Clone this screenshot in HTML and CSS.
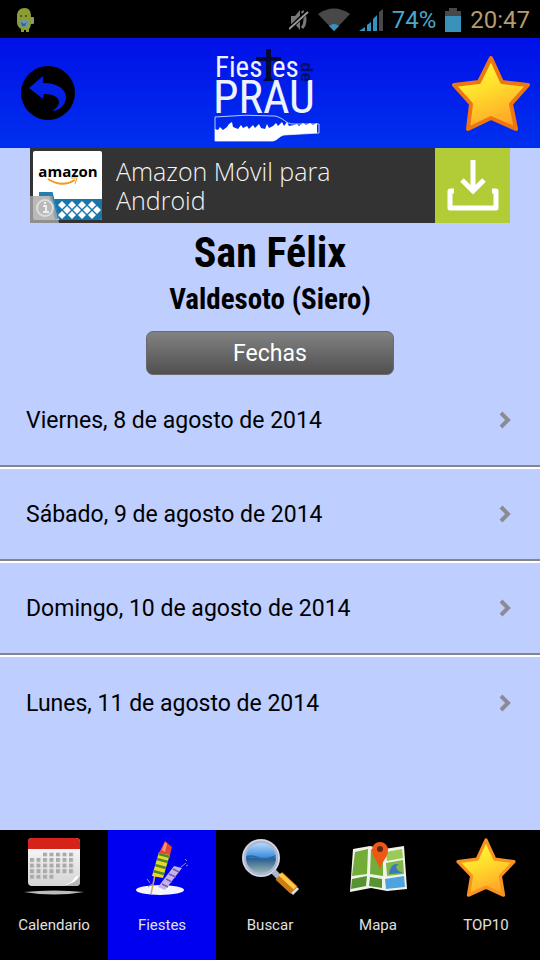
FILE: index.html
```html
<!DOCTYPE html>
<html lang="es">
<head>
<meta charset="utf-8">
<meta name="viewport" content="width=device-width, initial-scale=1">
<title>Fiestes de Prau</title>
<link rel="stylesheet" href="styles.css">
</head>
<body>
<div class="status">
  <svg width="18" height="26" viewBox="0 0 18 26" aria-hidden="true">
    <rect x="13" y="10" width="5" height="7" rx="1" fill="#8d9668"/>
    <path d="M1 9C1 4 4 1 8.500 1S15 4 15 9v7c0 3-1 5-2 6v3h-3v-2H8v2H5v-3C2 20 1 18 1 15z" fill="#8b9c35"/>
    <path d="M3 14c3-2 8-2 10 0l-1 5c-2 2-5 2-7 0z" fill="#6a99a0"/>
    <path d="M5 15l3 2 3-2-2 4H6z" fill="#315f93"/>
    <circle cx="5" cy="9" r="1" fill="#3c4816"/><circle cx="10" cy="9" r="1" fill="#3c4816"/>
  </svg>
  <div class="status-icons">
    <svg width="20" height="24" viewBox="0 0 20 24" aria-hidden="true">
      <path d="M2 8h4l5-6v20l-5-6H2z" fill="#777"/><path d="M13 3c4 4 4 13 0 17" fill="none" stroke="#777" stroke-width="3"/>
      <path d="M0 21L18 4" stroke="#000" stroke-width="4"/><path d="M0 21L19 4" stroke="#999" stroke-width="2"/>
    </svg>
    <svg width="32" height="24" viewBox="0 0 32 24" aria-hidden="true">
      <path d="M0 6Q16-5 32 6L16 23z" fill="#484848"/><path d="M11 18q5-4 10 0l-5 5z" fill="#3194c4"/>
    </svg>
    <svg width="24" height="24" viewBox="0 0 24 24" aria-hidden="true">
      <path d="M0 23l6-4v4zM8 17l4-3v9H8zM14 11l4-4v16h-4z" fill="#3194c4"/><path d="M20 4l4-3v22h-4z" fill="#484848"/>
    </svg>
    <span class="percent">74%</span>
    <svg class="battery" width="16" height="24" viewBox="0 0 16 24" aria-hidden="true">
      <path d="M0 3h4V0h8v3h4v21H0z" fill="#484848"/><path d="M0 8h16v16H0z" fill="#3a91b9"/>
    </svg>
    <time>20:47</time>
  </div>
</div>

<header class="header">
  <button class="icon-button back" type="button" aria-label="Volver">
    <svg width="54" height="54" viewBox="0 0 54 54" aria-hidden="true">
      <circle cx="27" cy="27" r="27" fill="#000"/>
      <path d="M8 22L22 10v7c14 0 23 6 23 14 0 7-6 14-14 14 4-3 7-5 7-9 0-5-6-8-15-8l-1 5z" fill="#0520e6"/>
    </svg>
  </button>
  <svg class="logo" width="112" height="104" viewBox="214 40 112 104" role="img" aria-label="Fiestes de Prau">
    <text class="logo-text" font-size="29"><tspan x="215" y="76">Fies</tspan><tspan x="272" y="76">es</tspan><tspan x="213" y="112" font-size="46">PRAU</tspan></text>
    <path d="M266 48h5v8h10v4h-10v16l3 4h-11l3-4V60h-10v-4h10z" fill="#020838"/>
    <text class="logo-de" x="0" y="0" font-size="17" transform="translate(301 61) rotate(90)">de</text>
    <path d="M215 116Q245 113 275 115C284 117 286 123 293 123H319V132L284 134C279 135 278 139 273 140H215Z" fill="none" stroke="#b9c9ff"/>
    <path d="M215 128l3 1 2-3 3 3 4-3 2-3 3-2 1 5 5 2 3-4 2 3 4-2 2 3 4-4 2 3 4-4 2 4 4 1 2-5 2 4 4-2 3-3 2 3 4-4 2 4 3-4 2 4 5-1 3-1 2 2 4-3 3 2 4-2 3 2 4-2V132L284 134C279 135 278 139 273 140H215Z" fill="#fff"/>
  </svg>
  <button class="icon-button" type="button" aria-label="Favorito">
    <svg width="80" height="77" viewBox="0 0 80 77" aria-hidden="true">
      <defs><linearGradient id="gold" x1=".3" y1="0" x2=".7" y2="1"><stop offset="0" stop-color="#ffff38"/><stop offset=".45" stop-color="#ffdb2c"/><stop offset="1" stop-color="#ff9e27"/></linearGradient></defs>
      <path d="M40 3L51 27 77 30 60 49 65 74 40 63 17 74 20 49 3 30 28 27z" fill="url(#gold)" stroke="#ef7510" stroke-width="4" stroke-linejoin="round"/>
    </svg>
  </button>
</header>

<main class="content">
  <a class="ad" href="#descargar">
    <svg class="ad-logo" width="72" height="75" viewBox="0 0 72 75" role="img" aria-label="amazon">
      <rect x="3" y="3" width="69" height="69" rx="2" fill="#fff"/>
      <text class="amazon" x="38" y="29" font-size="15" text-anchor="middle">amazon</text>
      <path d="M18 31q14 9 27 1" fill="none" stroke="#f49b25" stroke-width="2"/><path d="M41 30l6 0-2 6" fill="none" stroke="#f49b25" stroke-width="1"/>
      <path d="M9 46h12l6 25" fill="none" stroke="#247fae" stroke-width="4"/>
      <path d="M24 51h48v19q0 2-2 2H29z" fill="#1976ab"/>
      <g fill="#fff"><path id="d" d="M32 53l4 4-4 4-4-4z"/><use href="#d" x="10"/><use href="#d" x="20"/><use href="#d" x="30"/><use href="#d" x="5" y="5"/><use href="#d" x="15" y="5"/><use href="#d" x="25" y="5"/><use href="#d" x="35" y="5"/><use href="#d" y="10"/><use href="#d" x="10" y="10"/><use href="#d" x="20" y="10"/><use href="#d" x="30" y="10"/></g>
      <path d="M0 48h22l7 27H0z" fill="#a7a7a7" opacity=".8"/>
      <circle cx="15" cy="60" r="8" fill="none" stroke="#ddd" stroke-width="2"/><path d="M13 58h3v6m-3 0h6M15 54v2" fill="none" stroke="#eee" stroke-width="2"/>
    </svg>
    <span class="ad-text">Amazon Móvil para Android</span>
    <span class="ad-download">
      <svg width="52" height="52" viewBox="0 0 52 52" fill="none" stroke="#fff" stroke-width="5" aria-hidden="true">
        <path d="M26 0v31M15 20l11 11 11-11"/><path d="M7 31H3v17h46V31h-4" stroke-linejoin="round"/>
      </svg>
    </span>
  </a>
  <h1>San Félix</h1>
  <h2>Valdesoto (Siero)</h2>
  <button class="dates-button" type="button">Fechas</button>
  <ul class="dates">
    <li><a href="#d8">Viernes, 8 de agosto de 2014 <svg class="chevron" viewBox="0 0 12 18" aria-hidden="true"><path d="M2 2l7 7-7 7"/></svg></a></li>
    <li><a href="#d9">Sábado, 9 de agosto de 2014 <svg class="chevron" viewBox="0 0 12 18" aria-hidden="true"><path d="M2 2l7 7-7 7"/></svg></a></li>
    <li><a href="#d10">Domingo, 10 de agosto de 2014 <svg class="chevron" viewBox="0 0 12 18" aria-hidden="true"><path d="M2 2l7 7-7 7"/></svg></a></li>
    <li><a href="#d11">Lunes, 11 de agosto de 2014 <svg class="chevron" viewBox="0 0 12 18" aria-hidden="true"><path d="M2 2l7 7-7 7"/></svg></a></li>
  </ul>
</main>

<nav class="tabs">
  <a href="#calendario">
    <svg width="64" height="64" viewBox="0 0 64 64" aria-hidden="true">
      <defs><linearGradient id="paper" x2="0" y2="1"><stop stop-color="#fff"/><stop offset="1" stop-color="#d4d4d4"/></linearGradient>
      <pattern id="days" x="8" y="22" width="6.500" height="5.600" patternUnits="userSpaceOnUse"><rect width="4" height="4" fill="#aaa"/></pattern></defs>
      <rect x="6" y="2" width="52" height="48" rx="4" fill="url(#paper)"/>
      <path d="M6 13V6q0-4 4-4h44q4 0 4 4v7z" fill="#d5231b"/>
      <path d="M21 16.400h32v21.500H34v5.600H8V22h13z" fill="url(#days)"/>
      <path d="M58 40q-3 7-16 10h12q4 0 4-4z" fill="#b5b5b5"/><path d="M57 39q-2 8-15 10 10-3 11-8z" fill="#fff"/>
      <path d="M2 56q30-3 60 0-30 5-60 0z" fill="#bcbcbc"/>
    </svg>
    <span>Calendario</span>
  </a>
  <a class="active" href="#fiestes" aria-current="page">
    <svg width="64" height="64" viewBox="0 0 64 64" aria-hidden="true">
      <ellipse cx="30" cy="54" rx="24" ry="5" fill="#f5f5ff"/>
      <path d="M25 39l-4 19" stroke="#d9a35a" stroke-width="1.500"/>
      <path d="M29 16l11 2-7 24-11-2z" fill="#e8d82c"/>
      <path d="M29 18l11 3M27 23l11 3M25 29l11 3M23 35l11 3" stroke="#4f8925" stroke-width="2.500"/>
      <path d="M29 17l6-12 7 6-2 8z" fill="#df4939"/><path d="M32 14l3-8 2 2-2 8z" fill="#ff9170"/>
      <path d="M44 30l8 2-17 22-7-3z" fill="#c3b3e7"/><path d="M43 33l6 3M39 38l7 3M36 43l6 3M32 48l6 3" stroke="#7959b4" stroke-width="1.500"/>
      <path d="M51 31l5-4m-1-4l2 2m-1 5l2-1M17 43l3 4m-2 4l4-3" stroke="#9b8cc9" stroke-width="1"/>
    </svg>
    <span>Fiestes</span>
  </a>
  <a href="#buscar">
    <svg width="64" height="64" viewBox="0 0 64 64" aria-hidden="true">
      <defs><linearGradient id="lens" x2="0" y2="1"><stop stop-color="#c4e4ff"/><stop offset=".48" stop-color="#3b8dde"/><stop offset=".52" stop-color="#2a5c91"/><stop offset="1" stop-color="#a9c4b5"/></linearGradient></defs>
      <path d="M34 34l8 8" stroke="#abb6c9" stroke-width="6"/>
      <circle cx="23" cy="22" r="17" fill="url(#lens)" stroke="#aeb8d1" stroke-width="4"/>
      <circle cx="23" cy="22" r="18" fill="none" stroke="#e2e7f4" stroke-width="1"/>
      <path d="M8 20q6-2 12 1t18-2q-2 5-9 5t-12-2-8 1z" fill="#2b68a7"/>
      <path d="M41 40l15 14" stroke="#ce7c12" stroke-width="10"/><path d="M42 38l15 14" stroke="#ffc94b" stroke-width="4"/>
      <path d="M54 58l6-6" stroke="#ddd" stroke-width="3"/>
    </svg>
    <span>Buscar</span>
  </a>
  <a href="#mapa">
    <svg width="64" height="64" viewBox="0 0 64 64" aria-hidden="true">
      <path d="M7 13l17-3 14 3 20-3 3 43-20 2-16-3-21 4z" fill="#f1f3e8"/>
      <path d="M9 16l13-3-1 25-15 2zM25 13l12 3v24l-13-2z" fill="#74ac3a"/><path d="M40 16l16-3 1 9-16 3z" fill="#9acb56"/>
      <path d="M40 27l17-3 1 14-17 2z" fill="#82b848"/><path d="M6 43l15-3-1 10-15 3zM24 41l12 2v9l-13-2z" fill="#559333"/>
      <path d="M39 43l19-3 1 11-19 2z" fill="#4da3df"/><path d="M43 38c1-7 5-12 10-9-5 0-3 6 4 8z" fill="#397abd"/>
      <path d="M34 34c-2-10-8-12-8-20a8 8 0 0 1 16 0c0 8-6 10-8 20z" fill="#ed5915"/><circle cx="34" cy="13" r="3" fill="#5f2613"/>
    </svg>
    <span>Mapa</span>
  </a>
  <a href="#top10">
    <svg width="64" height="64" viewBox="0 0 80 80" aria-hidden="true">
      <path d="M40 5L51 29 75 32 58 50 62 74 40 64 18 74 22 50 5 32 29 29z" fill="url(#gold)" stroke="#f7931e" stroke-width="4" stroke-linejoin="round"/>
    </svg>
    <span>TOP10</span>
  </a>
</nav>
</body>
</html>
```
FILE: styles.css
```css
* {
  box-sizing: border-box;
}

body {
  margin: 0;
  min-height: 100vh;
  display: flex;
  flex-direction: column;
  background: #bdceff;
  color: #000;
  font-family: Roboto, "Liberation Sans", sans-serif;
}

a {
  color: inherit;
  text-decoration: none;
}

button {
  border: 0;
  padding: 0;
  font-family: inherit;
  cursor: pointer;
}

svg {
  display: block;
  flex: none;
}

.status {
  display: flex;
  align-items: center;
  justify-content: space-between;
  height: 38px;
  padding: 2px 10px 0 16px;
  background: #000;
  font-size: 24px;
}

.status-icons {
  display: flex;
  align-items: center;
  gap: 9px;
}

.percent {
  color: #4ba7cc;
}

.status time {
  color: #b49c6c;
}

.header {
  display: flex;
  align-items: center;
  justify-content: space-between;
  height: 110px;
  padding: 0 9px;
  background: linear-gradient(#0010e8, #0030ee);
}

.icon-button {
  display: flex;
  width: 80px;
  background: none;
}

.back {
  padding-left: 12px;
}

.logo-text {
  fill: #eef2ff;
  font-family: "Liberation Sans Narrow", "Roboto Condensed", "Liberation Sans", sans-serif;
}

.logo-de {
  fill: #020c60;
  font-family: "Liberation Sans Narrow", "Liberation Sans", sans-serif;
  font-weight: bold;
}

.content {
  flex: 1;
  display: flex;
  flex-direction: column;
  align-items: center;
}

.ad {
  display: flex;
  width: calc(100% - 60px);
  height: 75px;
  background: #333;
  color: #f4f4f4;
}

.amazon {
  font-family: "Open Sans", sans-serif;
  font-weight: bold;
}

.ad-text {
  flex: 1;
  align-self: center;
  padding: 0 80px 0 14px;
  font-family: "Open Sans", sans-serif;
  font-size: 25px;
  font-weight: 300;
  line-height: 29px;
}

.ad-download {
  display: grid;
  place-items: center;
  width: 75px;
  background: #b1cc36;
}

h1,
h2 {
  margin: 0;
  font-family: "Liberation Sans Narrow", "Roboto Condensed", sans-serif;
  font-weight: bold;
}

h1 {
  margin-top: 4px;
  font-size: 42px;
  line-height: 52px;
}

h2 {
  font-size: 29px;
  line-height: 40px;
}

.dates-button {
  width: 46%;
  height: 44px;
  margin-top: 12px;
  border: 1px solid #69696e;
  border-radius: 7px;
  background: linear-gradient(#828282, #505050);
  color: #fff;
  font-size: 23px;
}

.dates {
  align-self: stretch;
  margin: 0;
  padding: 0;
  list-style: none;
}

.dates a {
  display: flex;
  align-items: center;
  justify-content: space-between;
  height: 92px;
  padding: 0 29px 0 26px;
  font-size: 23px;
}

.dates li + li {
  border-top: 2px solid #fff;
}

.dates li:not(:last-child) a {
  border-bottom: 2px solid #828490;
}

.chevron {
  width: 12px;
  height: 18px;
  fill: none;
  stroke: #8b8b91;
  stroke-width: 4;
}

.tabs {
  display: grid;
  grid-template-columns: repeat(5, 1fr);
  height: 130px;
  background: #000;
  color: #e0e0e0;
  font-size: 15px;
  line-height: 20px;
}

.tabs a {
  display: flex;
  flex-direction: column;
  align-items: center;
  gap: 15px;
  padding-top: 6px;
}

.tabs .active {
  background: #0000f0;
}
```
